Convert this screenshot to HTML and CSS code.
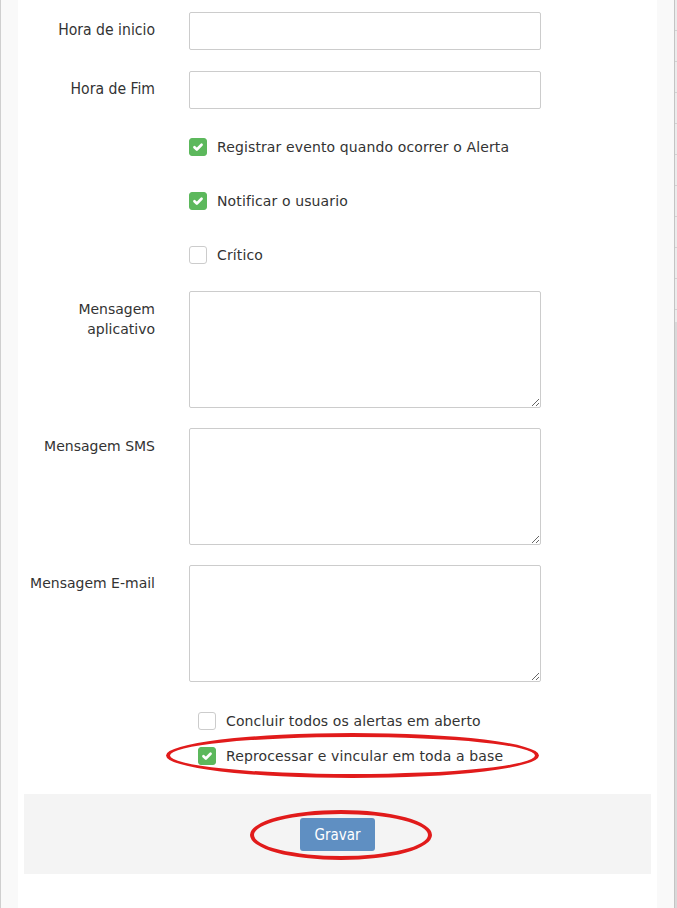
FILE: index.html
```html
<!DOCTYPE html>
<html lang="pt-br">
<head>
    <meta charset="UTF-8">
    <meta name="viewport" content="width=device-width, initial-scale=1.0">
    <title>Alerta</title>
    <link rel="stylesheet" href="styles.css">
</head>
<body>
    <div class="edge-left"></div>
    <div class="gutter"></div>
    <div class="panel">
        <div class="form-group first">
            <label class="label narrow">Hora de inicio</label>
            <input type="text" class="input">
        </div>
        <div class="form-group second">
            <label class="label narrow">Hora de Fim</label>
            <input type="text" class="input">
        </div>

        <div class="check-row">
            <span class="check on"><svg viewBox="0 0 18 18"><path d="M5 9.2l2.7 2.6L13 6.5" /></svg></span>
            <span class="check-text">Registrar evento quando ocorrer o Alerta</span>
        </div>
        <div class="check-row">
            <span class="check on"><svg viewBox="0 0 18 18"><path d="M5 9.2l2.7 2.6L13 6.5" /></svg></span>
            <span class="check-text">Notificar o usuario</span>
        </div>
        <div class="check-row last">
            <span class="check"></span>
            <span class="check-text">Crítico</span>
        </div>

        <div class="form-group area">
            <label class="label">Mensagem<br>aplicativo</label>
            <textarea class="textarea"></textarea>
        </div>
        <div class="form-group area">
            <label class="label">Mensagem SMS</label>
            <textarea class="textarea"></textarea>
        </div>
        <div class="form-group area">
            <label class="label">Mensagem E-mail</label>
            <textarea class="textarea"></textarea>
        </div>

        <div class="options">
            <div class="option">
                <span class="check"></span>
                <span class="check-text">Concluir todos os alertas em aberto</span>
            </div>
            <div class="option">
                <span class="check on"><svg viewBox="0 0 18 18"><path d="M5 9.2l2.7 2.6L13 6.5" /></svg></span>
                <span class="check-text">Reprocessar e vincular em toda a base</span>
            </div>
            <div class="mark mark-option"></div>
        </div>

        <div class="footer">
            <button class="btn-save">Gravar</button>
            <div class="mark mark-save"></div>
        </div>
    </div>
    <div class="gutter"></div>
    <div class="edge-right"></div>
</body>
</html>
```

FILE: styles.css
```css
* {
    box-sizing: border-box;
}
body {
    margin: 0;
    display: flex;
    height: 908px;
    overflow: hidden;
    background-color: #f9f9f9;
    font-family: "DejaVu Sans", Verdana, sans-serif;
    font-size: 14px;
    color: #333;
}
.edge-left {
    width: 1px;
    background: #cfcfcf;
}
.gutter {
    width: 17px;
}
.panel {
    width: 639px;
    background: #fff;
    padding-top: 12px;
    position: relative;
}
.edge-right {
    width: 3px;
    border-left: 1px solid #c4c4c4;
    background:
        repeating-linear-gradient(to bottom, #ececec 0, #ececec 30px, #d2d2d2 30px, #d2d2d2 31px) top / 100% 322px no-repeat,
        #d9d9d9;
}
.form-group {
    display: flex;
    align-items: flex-start;
}
.form-group.first {
    margin-bottom: 21px;
}
.form-group.second {
    margin-bottom: 29px;
}
.form-group.area {
    margin-bottom: 20px;
}
.label {
    width: 137px;
    margin-right: 34px;
    text-align: right;
    padding-top: 8px;
    line-height: 20px;
}
.label.narrow {
    font-family: "DejaVu Sans Condensed", "DejaVu Sans", sans-serif;
    font-size: 15.6px;
}
.input {
    width: 352px;
    height: 38px;
    border: 1px solid #ccc;
    border-radius: 2px;
    font-size: 14px;
}
.textarea {
    width: 352px;
    height: 117px;
    border: 1px solid #ccc;
    border-radius: 2px;
    resize: both;
    font-family: inherit;
}
.check-row {
    display: flex;
    align-items: center;
    margin-left: 171px;
    height: 18px;
    margin-bottom: 36px;
}
.check-row.last {
    margin-bottom: 27px;
}
.check {
    width: 18px;
    height: 18px;
    border: 1px solid #ccc;
    border-radius: 3px;
    background: #fff;
    margin-right: 10px;
    flex-shrink: 0;
}
.check.on {
    background: #5cb85c;
    border-color: #5cb85c;
}
.check svg {
    display: block;
    width: 16px;
    height: 16px;
    fill: none;
    stroke: #fff;
    stroke-width: 3;
    stroke-linecap: round;
    stroke-linejoin: round;
}
.check-text {
    line-height: 18px;
    letter-spacing: 0.12px;
}
.options {
    position: relative;
    margin-top: 30px;
    margin-left: 180px;
}
.option {
    display: flex;
    align-items: center;
    height: 18px;
    margin-bottom: 17px;
}
.option:last-of-type {
    margin-bottom: 0;
}
.footer {
    position: relative;
    margin: 29px 6px 0;
    height: 80px;
    background: #f4f4f4;
    padding-top: 24px;
    text-align: center;
}
.btn-save {
    width: 75px;
    height: 33px;
    border: none;
    border-radius: 3px;
    background: #5f8fc2;
    color: #fff;
    font-family: "DejaVu Sans Condensed", "DejaVu Sans", sans-serif;
    font-size: 15px;
}
.mark {
    position: absolute;
    border: 4px solid #e11b1b;
    border-radius: 50%;
}
.mark-option {
    left: -32px;
    top: 21px;
    width: 373px;
    height: 45px;
}
.mark-save {
    left: 226px;
    top: 16px;
    width: 182px;
    height: 50px;
}
```
